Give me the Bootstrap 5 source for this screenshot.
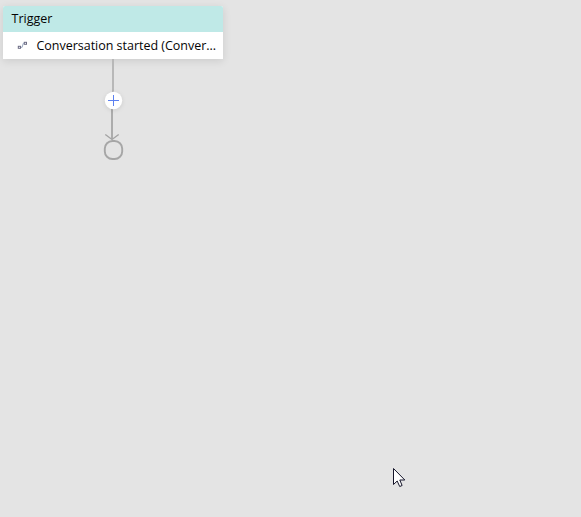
<!DOCTYPE html>
<html lang="en">
<head>
<meta charset="utf-8">
<meta name="viewport" content="width=device-width, initial-scale=1">
<title>Trigger flow</title>
<link href="https://cdn.jsdelivr.net/npm/bootstrap@5.3.0/dist/css/bootstrap.min.css" rel="stylesheet">
<style>
  body { background: #e4e4e4; font-family: "Open Sans", "Noto Sans", sans-serif; font-size: 12.5px; color: #050505; height: 517px; }
  .flow-canvas { width: 581px; height: 517px; padding: 6px 0 0 3px; }
  .flow-column { width: 220px; }
  .trigger-node { border-radius: 2px 2px 0 0; box-shadow: 0 2px 9px rgba(0,0,0,.11); background: #fff; }
  .trigger-title { height: 26px; padding-left: 8.5px; background: #bfe9e7; line-height: 26px; border-radius: 2px 2px 0 0; }
  .trigger-body { height: 27px; padding-left: 14px; line-height: 27px; }
  .trigger-body svg { width: 11px; height: 9px; margin-right: 8.5px; }
  .event-text { letter-spacing: -.02px; }
  .connector { width: 40px; height: 106px; }
  .add-step { filter: drop-shadow(0 1px 2px rgba(0,0,0,.1)); }
  .pointer { left: 392px; top: 467px; }
</style>
<script src="https://cdn.jsdelivr.net/npm/bootstrap@5.3.0/dist/js/bootstrap.bundle.min.js"></script>
</head>
<body class="m-0 overflow-hidden">
<main class="flow-canvas position-relative overflow-hidden">
  <div class="flow-column d-flex flex-column align-items-center">
    <section class="trigger-node w-100">
      <div class="trigger-title"><span class="title-text">Trigger</span></div>
      <div class="trigger-body d-flex align-items-center text-nowrap">
        <svg class="flex-shrink-0" viewBox="0 0 11 9" fill="none" stroke="#6c6c84" stroke-width="1">
          <rect x="1.3" y="5.3" width="2.2" height="2"/><rect x="7.3" y="1.3" width="2.2" height="2"/>
          <path d="M4 6.3h1.1l1.2-4H7.3" stroke="#8b9bb5" stroke-width=".9"/>
        </svg>
        <span class="event-text">Conversation started (Conver...</span>
      </div>
    </section>
    <svg class="connector" viewBox="93 59 40 106" fill="none">
      <path d="M113 59v34" stroke="#b8b8b8" stroke-width="2"/>
      <path d="M112 108v31" stroke="#acacac" stroke-width="2"/>
      <path d="M105.3 134.5L112 139.5L118.7 134.5" stroke="#a4a4a4" stroke-width="1.4"/>
      <rect x="104.8" y="141" width="17.4" height="18" rx="7.6" stroke="#a6a6a6" stroke-width="1.9"/>
      <circle class="add-step" cx="113.5" cy="100.5" r="8.7" fill="#fff"/>
      <path d="M108 100.5h11M113.5 95v11" stroke="#5c80f0" stroke-width="1"/>
    </svg>
  </div>
  <svg class="pointer position-absolute" width="14" height="21" viewBox="0 0 14 21">
    <path d="M1.5 1.5V17.5L5.2 14L7.7 19.5L10.1 18.5L7.8 13H12.8Z" fill="#fff" stroke="#15152a" stroke-width="1"/>
  </svg>
</main>
</body>
</html>
